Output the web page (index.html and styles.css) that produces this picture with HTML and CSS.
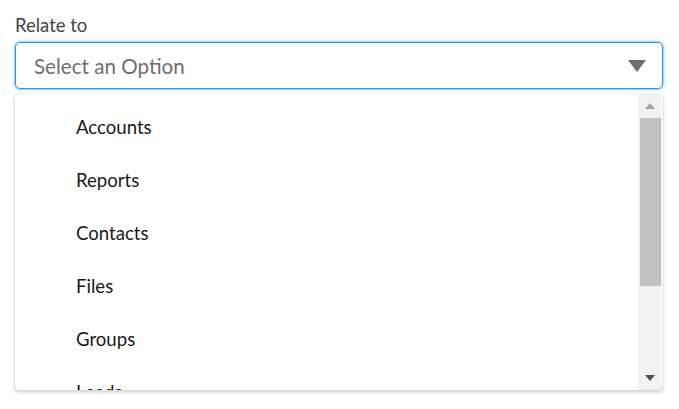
FILE: index.html
```html
<!DOCTYPE html>
<html>
<head>
<meta charset="utf-8">
<link rel="stylesheet" href="styles.css">
</head>
<body>
<div class="field">
  <label class="label">Relate to</label>
  <div class="combo">
    <span class="placeholder">Select an Option</span>
    <svg class="caret" width="18" height="12" viewBox="0 0 18 12"><path d="M0 0 H18 L9 12 Z" fill="#706e6b"/></svg>
  </div>
  <div class="dropdown">
    <ul class="list">
      <li>Accounts</li>
      <li>Reports</li>
      <li>Contacts</li>
      <li>Files</li>
      <li>Groups</li>
      <li>Leads</li>
    </ul>
    <div class="scrollbar">
      <div class="sb-btn"><svg width="10" height="6" viewBox="0 0 10 6"><path d="M0 6 H10 L5 0 Z" fill="#a3a3a3"/></svg></div>
      <div class="sb-track"><div class="sb-thumb"></div></div>
      <div class="sb-btn"><svg width="10" height="6" viewBox="0 0 10 6"><path d="M0 0 H10 L5 6 Z" fill="#505050"/></svg></div>
    </div>
  </div>
</div>
</body>
</html>
```
FILE: styles.css
```css
html, body {
  margin: 0;
  padding: 0;
  background: #fff;
}
body {
  font-family: Lato, "Open Sans", sans-serif;
  width: 679px;
  height: 409px;
  overflow: hidden;
}
.field {
  padding: 14px 16px 0 15px;
  display: flex;
  flex-direction: column;
}
.label {
  font-size: 18.5px;
  line-height: 22px;
  color: #444444;
  margin-bottom: 6px;
}
.combo {
  height: 45px;
  border: 1px solid #1b96ff;
  border-radius: 5px;
  box-shadow: 0 0 3px #1b96ff;
  display: flex;
  align-items: center;
  padding: 0 16px 0 18px;
}
.placeholder {
  flex: 1;
  font-size: 20.6px;
  color: #706e6b;
}
.caret {
  display: block;
}
.dropdown {
  margin-top: 5px;
  height: 296px;
  border-radius: 4px;
  background: #fff;
  box-shadow: 0 2px 4px rgba(0,0,0,0.2), 0 0 1px rgba(0,0,0,0.25);
  display: flex;
  overflow: hidden;
}
.list {
  flex: 1;
  list-style: none;
  margin: 0;
  padding: 7px 0 0 61px;
  overflow: hidden;
}
.list li {
  font-size: 18.6px;
  line-height: 53px;
  height: 53px;
  color: #181818;
}
.scrollbar {
  width: 24px;
  background: #f1f1f1;
  display: flex;
  flex-direction: column;
  margin-right: 1px;
}
.sb-btn {
  height: 24px;
  display: flex;
  align-items: center;
  justify-content: center;
}
.sb-track {
  flex: 1;
  padding: 0 1px 0 2px;
}
.sb-thumb {
  height: 168px;
  background: #c1c1c1;
}
```
